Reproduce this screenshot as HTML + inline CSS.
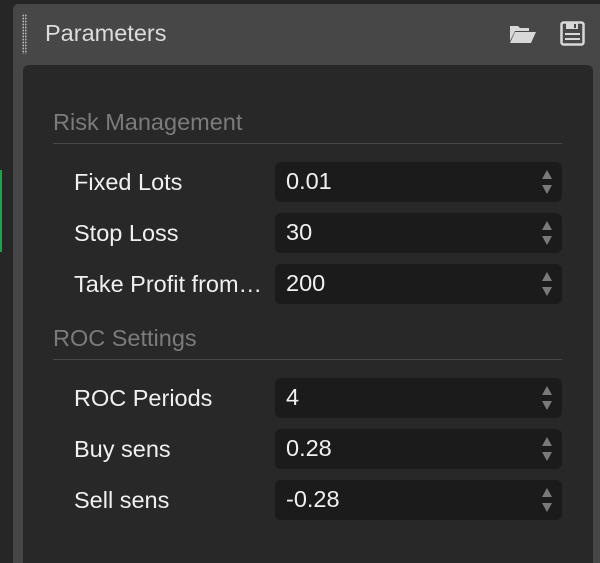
<!DOCTYPE html>
<html style="overflow:hidden;height:563px"><head><style>
body{margin:0;width:600px;height:563px;background:#262626;overflow:hidden;font-family:"Liberation Sans",Arial,sans-serif;position:relative}
.green{position:absolute;left:0;top:170px;width:2px;height:82px;background:#1fa34a}
.panel{position:absolute;left:13px;top:4px;width:600px;height:559px;background:#474747;border-radius:5px 5px 0 0}
.grip{position:absolute;left:22px;top:14px;width:5px;height:40px;background-image:radial-gradient(circle,#bbb 0.8px,transparent 1px);background-size:2.5px 3px}
.title{position:absolute;left:45px;top:20px;font-size:23.5px;color:#dcdcdc}
.inner{position:absolute;left:23px;top:65px;width:570px;height:498px;background:#282828;border-radius:6px 6px 0 0}
.sec{position:absolute;left:53px;font-size:23.5px;color:#7b7b7b}
.line{position:absolute;left:53px;width:509px;height:1px;background:#484848}
.lab{position:absolute;left:74px;font-size:23.5px;color:#f0f0f0}
.inp{position:absolute;left:275px;width:287px;height:40px;background:#1b1b1b;border-radius:6px}
.inp span{position:absolute;left:11px;top:6px;font-size:23.5px;color:#f0f0f0}
.inp i{position:absolute;right:10px;width:0;height:0;border-left:5px solid transparent;border-right:5px solid transparent}
.up{top:8px;border-bottom:9px solid #7a7a7a}
.dn{top:23px;border-top:9px solid #7a7a7a}
</style></head><body>
<div class="green"></div>
<div class="panel"></div>
<div class="grip"></div>
<div class="title">Parameters</div>
<svg style="position:absolute;left:509px;top:24px" width="28" height="22" viewBox="0 0 28 22"><path d="M1 2h8l2 2h9v3H6L1 17z" fill="#d8d8d8"/><path d="M6 8h21l-5 11H1z" fill="#d8d8d8"/></svg>
<svg style="position:absolute;left:560px;top:21px" width="26" height="26" viewBox="0 0 26 26"><rect x="1.5" y="1.5" width="22" height="22" rx="2" fill="none" stroke="#d8d8d8" stroke-width="2.5"/><rect x="6" y="2" width="12" height="6" fill="#d8d8d8"/><rect x="14" y="3" width="2" height="4" fill="#474747"/><rect x="5" y="12" width="15" height="2" fill="#d8d8d8"/><rect x="5" y="17" width="15" height="2" fill="#d8d8d8"/></svg>
<div class="inner"></div>
<div class="sec" style="top:109px">Risk Management</div>
<div class="line" style="top:143px"></div>
<div class="lab" style="top:169px">Fixed Lots</div>
<div class="inp" style="top:162px"><span>0.01</span><i class="up"></i><i class="dn"></i></div>
<div class="lab" style="top:220px">Stop Loss</div>
<div class="inp" style="top:213px"><span>30</span><i class="up"></i><i class="dn"></i></div>
<div class="lab" style="top:271px">Take Profit from…</div>
<div class="inp" style="top:264px"><span>200</span><i class="up"></i><i class="dn"></i></div>
<div class="sec" style="top:325px">ROC Settings</div>
<div class="line" style="top:359px"></div>
<div class="lab" style="top:385px">ROC Periods</div>
<div class="inp" style="top:378px"><span>4</span><i class="up"></i><i class="dn"></i></div>
<div class="lab" style="top:436px">Buy sens</div>
<div class="inp" style="top:429px"><span>0.28</span><i class="up"></i><i class="dn"></i></div>
<div class="lab" style="top:487px">Sell sens</div>
<div class="inp" style="top:480px"><span>-0.28</span><i class="up"></i><i class="dn"></i></div>
</body></html>
